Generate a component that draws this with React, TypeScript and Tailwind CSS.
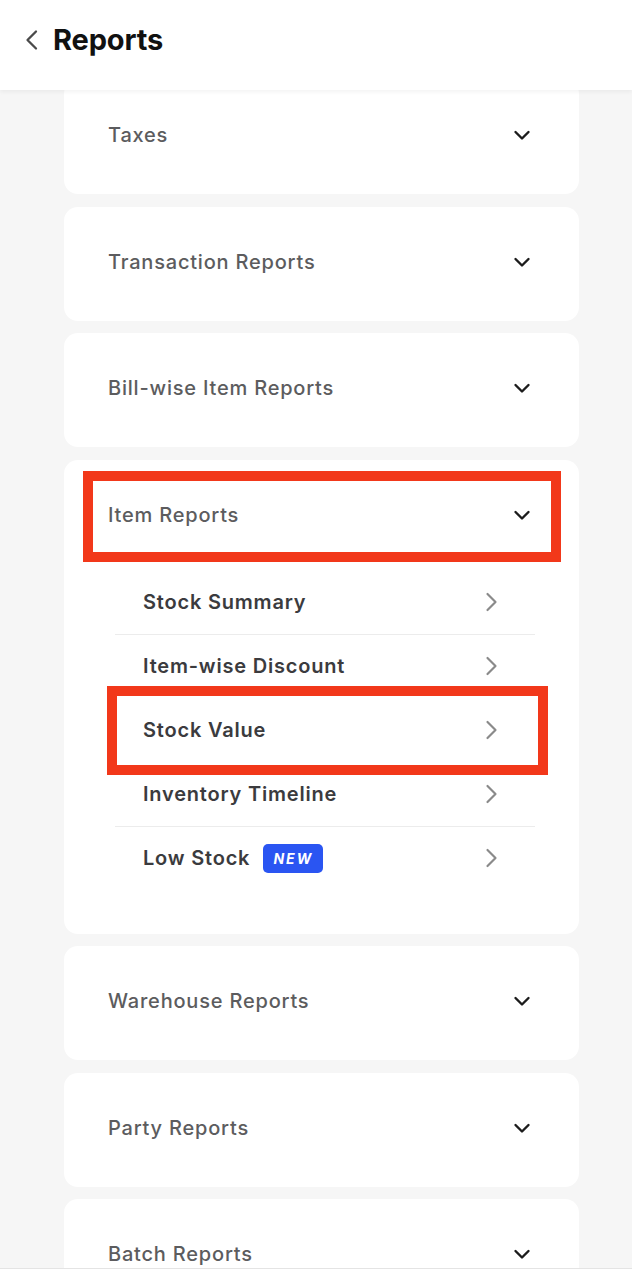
import { ReactNode } from "react";

const FONT = "font-['Inter','Roboto','Liberation_Sans',sans-serif]";

function ChevronDown() {
  return (
    <svg width="20" height="20" viewBox="0 0 20 20" fill="none" className="shrink-0">
      <path d="M3.5 7l6.5 6.5L16.5 7" stroke="#1c1c1c" strokeWidth="2.4" strokeLinecap="round" strokeLinejoin="round" />
    </svg>
  );
}

function ChevronRight() {
  return (
    <svg width="14" height="22" viewBox="0 0 14 22" fill="none" className="shrink-0">
      <path d="M2.5 3l8 8-8 8" stroke="#8a8a8a" strokeWidth="2.2" strokeLinecap="round" strokeLinejoin="round" />
    </svg>
  );
}

function Card({ title, children }: { title: string; children?: ReactNode }) {
  return (
    <div className={`relative w-[515px] shrink-0 rounded-[14px] bg-white ${children ? "pb-[44px]" : "h-[114px]"}`}>
      <div className="flex h-[110px] items-center justify-between pl-[44px] pr-[47px]">
        <span className="text-[20px] font-medium tracking-[0.04em] text-[#5c5c5e]">{title}</span>
        <ChevronDown />
      </div>
      {children}
    </div>
  );
}

function SubRow({ label, badge, divider }: { label: string; badge?: boolean; divider?: boolean }) {
  return (
    <div className={`flex h-[64px] items-center justify-between pl-[28px] pr-[36px] ${divider ? "border-t border-[#ececec]" : ""}`}>
      <div className="flex items-center gap-[13px]">
        <span className="text-[20px] font-semibold tracking-[0.04em] text-[#3b3b3e]">{label}</span>
        {badge && (
          <span className="flex h-[29px] w-[60px] items-center justify-center rounded-[5px] bg-[#2a55f2] text-[14px] font-bold italic tracking-[0.14em] text-white">
            NEW
          </span>
        )}
      </div>
      <ChevronRight />
    </div>
  );
}

export default function App() {
  return (
    <div className={`flex h-[1280px] w-full flex-col overflow-hidden bg-[#f6f6f6] ${FONT}`}>
      <header className="relative z-10 flex h-[90px] shrink-0 items-start gap-[13px] bg-white pl-[24px] pt-[22px] shadow-[0_2px_4px_rgba(0,0,0,0.05)]">
        <svg width="16" height="36" viewBox="0 0 16 36" fill="none" className="shrink-0">
          <path d="M12 9.5L3.5 18l8.5 8.5" stroke="#4a4a4a" strokeWidth="2.3" strokeLinecap="round" strokeLinejoin="round" />
        </svg>
        <h1 className="text-[29px] font-bold leading-[36px] tracking-[-0.005em] text-[#111]">Reports</h1>
      </header>

      <main className="-mt-[10px] flex flex-1 flex-col gap-[12.5px] overflow-hidden pl-[64px]">
        <Card title="Taxes" />
        <Card title="Transaction Reports" />
        <Card title="Bill-wise Item Reports" />
        <Card title="Item Reports">
          <div className="ml-[51px] mr-[44px]">
            <SubRow label="Stock Summary" />
            <SubRow label="Item-wise Discount" divider />
            <SubRow label="Stock Value" />
            <SubRow label="Inventory Timeline" />
            <SubRow label="Low Stock" badge divider />
          </div>
          <div className="pointer-events-none absolute left-[19px] top-[11px] h-[91px] w-[478px] border-[10px] border-[#f2381a]" />
          <div className="pointer-events-none absolute left-[43px] top-[226px] h-[89px] w-[441px] border-[10px] border-[#f2381a]" />
        </Card>
        <Card title="Warehouse Reports" />
        <Card title="Party Reports" />
        <Card title="Batch Reports" />
      </main>

      <footer className="h-[12px] shrink-0 border-t border-[#e4e4e4] bg-white" />
    </div>
  );
}
